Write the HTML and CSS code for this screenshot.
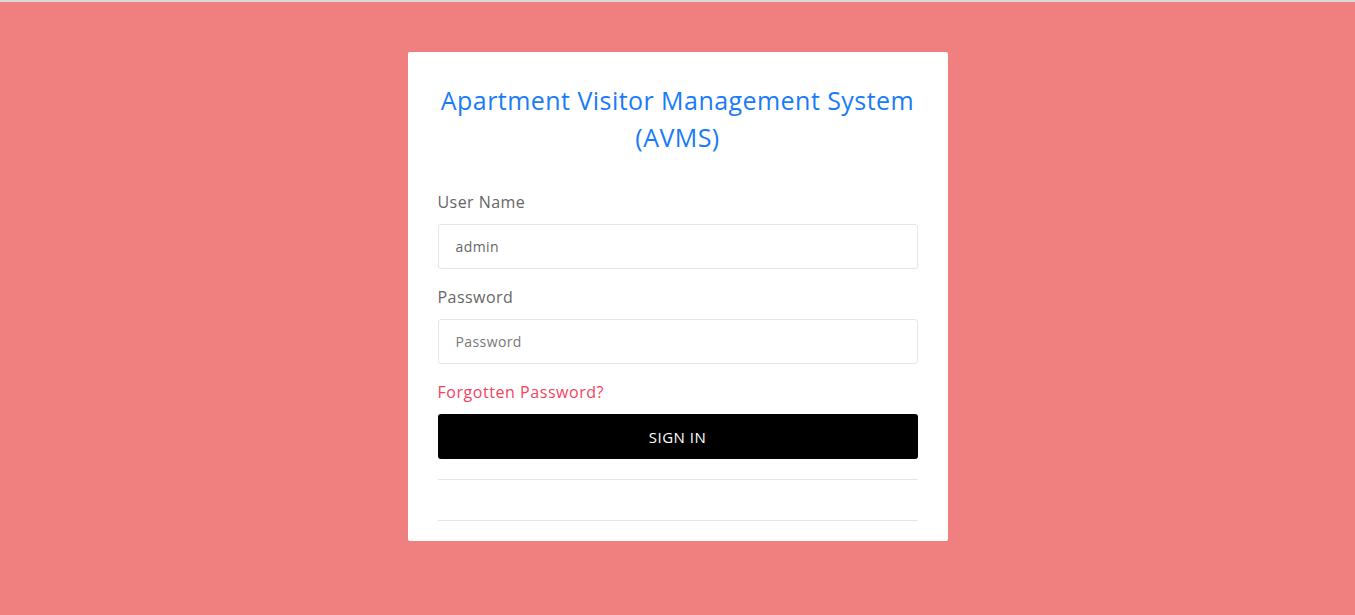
FILE: index.html
```html
<!doctype html>
<html lang="en">
  <head>
    <meta charset="utf-8">
    <title>AVMS | Login</title>
    <meta name="viewport" content="width=device-width, initial-scale=1.0">
    <link rel="stylesheet" href="styles.css">
  </head>
  <body>
    <main class="login-wrap">
      <div class="login-card">
        <h3 class="login-title">Apartment Visitor Management System (AVMS)</h3>

        <form class="login-form">
          <div class="form-group">
            <label for="username">User Name</label>
            <input id="username" class="form-control" type="text" value="admin">
          </div>

          <div class="form-group">
            <label for="password">Password</label>
            <input id="password" class="form-control" type="password" placeholder="Password">
          </div>

          <a class="forgot" href="#">Forgotten Password?</a>

          <button class="btn-signin" type="submit">SIGN IN</button>

          <hr class="rule">
          <hr class="rule rule-last">
        </form>
      </div>
    </main>
  </body>
</html>
```

FILE: styles.css
```css
:root {
  --page-bg: #f08080;
  --blue: #1a7bf8;
  --text: #666666;
  --line: #e5e5e5;
  --red: #f5435f;
}

html,
body {
  margin: 0;
  min-height: 100%;
}

body {
  background-color: var(--page-bg);
  border-top: 2px solid #d9d9d9;
  font-family: "Open Sans", "Noto Sans", sans-serif;
  color: var(--text);
}

.login-wrap {
  display: flex;
  justify-content: center;
  padding-top: 50px;
}

.login-card {
  width: 540px;
  box-sizing: border-box;
  background: #fff;
  border-radius: 2px;
  padding: 30px 30px 20px;
}

.login-title {
  margin: 0 0 35px;
  text-align: center;
  font-size: 25px;
  font-weight: 400;
  line-height: 37px;
  letter-spacing: 0.45px;
  color: var(--blue);
}

.form-group {
  margin-bottom: 17px;
}

.form-group label {
  display: block;
  font-size: 16px;
  line-height: 22px;
  letter-spacing: 0.45px;
  margin-bottom: 11px;
  color: var(--text);
}

.form-control {
  display: block;
  width: 100%;
  height: 45px;
  box-sizing: border-box;
  border: 1px solid var(--line);
  border-radius: 3px;
  padding: 0 17px;
  font-family: inherit;
  font-size: 14px;
  letter-spacing: 0.4px;
  color: var(--text);
  background: #fff;
}

.form-control::placeholder {
  color: #777;
}

.forgot {
  display: block;
  font-size: 16px;
  line-height: 22px;
  letter-spacing: 0.55px;
  color: var(--red);
  text-decoration: none;
  margin-bottom: 11px;
}

.btn-signin {
  display: block;
  width: 100%;
  height: 45px;
  border: 0;
  border-radius: 3px;
  background: #000;
  color: #fff;
  font-family: inherit;
  font-size: 15px;
  letter-spacing: 0.5px;
}

.rule {
  border: 0;
  border-top: 1px solid var(--line);
  margin: 20px 0 0;
}

.rule-last {
  margin-top: 40px;
}
```
